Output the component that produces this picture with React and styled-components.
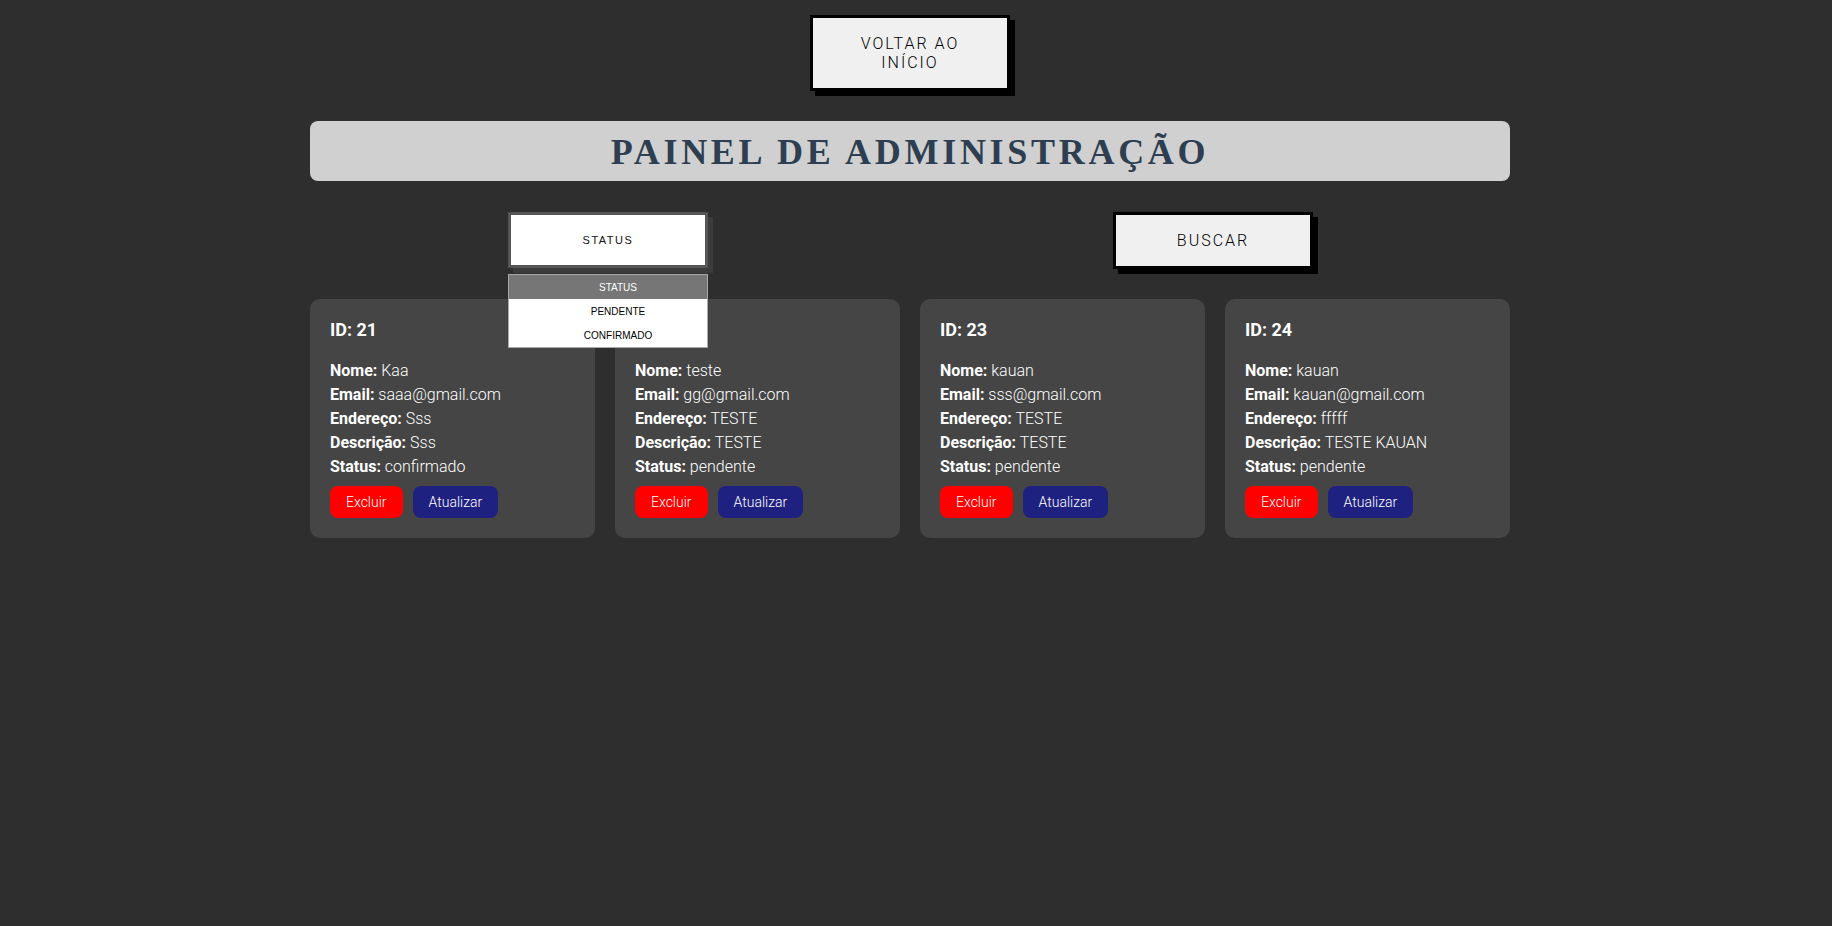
import React, { useState } from 'react';
import styled, { createGlobalStyle } from 'styled-components';

const GlobalStyle = createGlobalStyle`
	body {
		margin: 0;
		background-color: #2e2e2e;
		font-family: Roboto, "Liberation Sans", Arial, sans-serif;
	}
`;

const Page = styled.div`
	box-sizing: border-box;
	min-height: 100vh;
	padding: 15px 12px 40px 0;
`;

const Container = styled.div`
	width: 1200px;
	margin: 0 auto;
	display: flex;
	flex-direction: column;
	align-items: center;
`;

const BoxButton = styled.button`
	box-sizing: border-box;
	width: 200px;
	padding: 16px 24px;
	border: 3px solid #000;
	background-color: #f0f0f0;
	box-shadow: 5px 5px 0 #000;
	color: #000;
	font-family: Roboto, "Liberation Sans", sans-serif;
	font-weight: 300;
	font-size: 16px;
	line-height: 19px;
	letter-spacing: 2px;
	text-transform: uppercase;
	cursor: pointer;
`;

const TitleBar = styled.div`
	box-sizing: border-box;
	width: 100%;
	height: 60px;
	margin-top: 30px;
	padding-top: 2px;
	border-radius: 8px;
	background-color: #d0d0d0;
	display: flex;
	align-items: center;
	justify-content: center;
`;

const Title = styled.h1`
	margin: 0;
	font-family: "Liberation Serif", "Times New Roman", serif;
	font-size: 36px;
	font-weight: 700;
	letter-spacing: 3.7px;
	color: #2c3e50;
`;

// as colunas não são iguais: o select fica um pouco à esquerda e o botão à direita
const FilterRow = styled.div`
	width: 100%;
	display: grid;
	grid-template-columns: 596px 594px;
	column-gap: 10px;
	margin: 31px 0 30px;
`;

const FilterCell = styled.div`
	display: flex;
	justify-content: center;
`;

const SelectWrap = styled.div`
	position: relative;
	width: 200px;
`;

const SelectBox = styled.div`
	box-sizing: border-box;
	height: 56px;
	border: 3px solid #565656;
	background-color: #fff;
	box-shadow: 5px 5px 0 #3c3c3c;
	display: flex;
	align-items: center;
	justify-content: center;
	font-family: "Liberation Sans", Arial, sans-serif;
	font-size: 11px;
	letter-spacing: 1.5px;
	color: #111;
	cursor: pointer;
`;

const Dropdown = styled.ul`
	position: absolute;
	top: calc(100% + 5px);
	left: 0;
	z-index: 10;
	box-sizing: border-box;
	width: 200px;
	margin: 0;
	padding: 0;
	list-style: none;
	border: 1px solid #a8a8a8;
	background-color: #fff;
`;

const Option = styled.li`
	height: 24px;
	padding-left: 20px;
	display: flex;
	align-items: center;
	justify-content: center;
	font-family: "Liberation Sans", Arial, sans-serif;
	font-size: 10px;
	background-color: ${props => (props.active ? '#767676' : '#fff')};
	color: ${props => (props.active ? '#fff' : '#000')};
`;

const CardGrid = styled.div`
	width: 100%;
	display: grid;
	grid-template-columns: repeat(4, 1fr);
	gap: 20px;
`;

const Card = styled.div`
	padding: 20px;
	border-radius: 10px;
	background-color: #454545;
	color: #fff;
`;

const CardId = styled.h3`
	margin: 0 0 19px;
	font-size: 18px;
	font-weight: 700;
	line-height: 21px;
`;

const Line = styled.p`
	margin: 0;
	font-size: 16px;
	font-weight: 300;
	line-height: 24px;

	& > b {
		font-weight: 700;
	}
`;

const Actions = styled.div`
	display: flex;
	gap: 10px;
	margin-top: 7px;
`;

const ActionButton = styled.button`
	height: 32px;
	padding: 0 16px;
	border: none;
	border-radius: 8px;
	background-color: ${props => props.color};
	color: #fff;
	font-family: Roboto, sans-serif;
	font-size: 14px;
	font-weight: 300;
	cursor: pointer;
`;

const pedidos = [
	{ id: 21, nome: 'Kaa', email: 'saaa@gmail.com', endereco: 'Sss', descricao: 'Sss', status: 'confirmado' },
	{ id: 22, nome: 'teste', email: 'gg@gmail.com', endereco: 'TESTE', descricao: 'TESTE', status: 'pendente' },
	{ id: 23, nome: 'kauan', email: 'sss@gmail.com', endereco: 'TESTE', descricao: 'TESTE', status: 'pendente' },
	{ id: 24, nome: 'kauan', email: 'kauan@gmail.com', endereco: 'fffff', descricao: 'TESTE KAUAN', status: 'pendente' }
];

const opcoes = ['STATUS', 'PENDENTE', 'CONFIRMADO'];

const App = () => {
	const [filtro, setFiltro] = useState('STATUS');
	const [aberto, setAberto] = useState(true);

	return (
		<Page>
			<GlobalStyle />
			<Container>
				<BoxButton>Voltar ao início</BoxButton>
				<TitleBar>
					<Title>PAINEL DE ADMINISTRAÇÃO</Title>
				</TitleBar>
				<FilterRow>
					<FilterCell>
						<SelectWrap>
							<SelectBox onClick={() => setAberto(!aberto)}>{filtro}</SelectBox>
							{aberto && (
								<Dropdown>
									{opcoes.map(op => (
										<Option
											key={op}
											active={op === filtro}
											onClick={() => {
												setFiltro(op);
												setAberto(false);
											}}
										>
											{op}
										</Option>
									))}
								</Dropdown>
							)}
						</SelectWrap>
					</FilterCell>
					<FilterCell>
						<BoxButton>Buscar</BoxButton>
					</FilterCell>
				</FilterRow>
				<CardGrid>
					{pedidos.map(p => (
						<Card key={p.id}>
							<CardId>ID: {p.id}</CardId>
							<Line><b>Nome:</b> {p.nome}</Line>
							<Line><b>Email:</b> {p.email}</Line>
							<Line><b>Endereço:</b> {p.endereco}</Line>
							<Line><b>Descrição:</b> {p.descricao}</Line>
							<Line><b>Status:</b> {p.status}</Line>
							<Actions>
								<ActionButton color="#ff0000">Excluir</ActionButton>
								<ActionButton color="#1f2180">Atualizar</ActionButton>
							</Actions>
						</Card>
					))}
				</CardGrid>
			</Container>
		</Page>
	);
};

export default App;
